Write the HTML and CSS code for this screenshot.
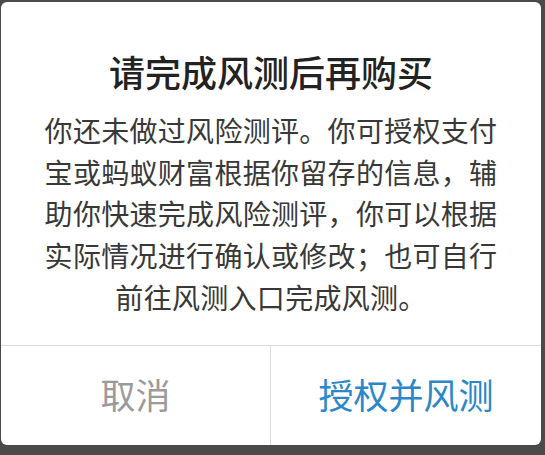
FILE: index.html
```html
<!DOCTYPE html>
<html lang="zh-CN">
<head>
<meta charset="utf-8">
<title>请完成风测后再购买</title>
<link rel="stylesheet" href="styles.css">
</head>
<body>
<div class="dialog">
  <div class="content">
    <h1 class="title">请完成风测后再购买</h1>
    <p class="message">你还未做过风险测评。你可授权支付<br>宝或蚂蚁财富根据你留存的信息，辅<br>助你快速完成风险测评，你可以根据<br>实际情况进行确认或修改；也可自行<br>前往风测入口完成风测。</p>
  </div>
  <div class="actions">
    <div class="btn btn-cancel">取消</div>
    <div class="btn btn-confirm">授权并风测</div>
  </div>
</div>
</body>
</html>
```

FILE: styles.css
```css
html, body {
  margin: 0;
  padding: 0;
  background: #4a4a4a;
  width: 545px;
  height: 455px;
  overflow: hidden;
}
body {
  font-family: "Noto Sans CJK SC", "Noto Sans", sans-serif;
}
.dialog {
  margin: 2px 4px 0 1px;
  height: 443px;
  background: #ffffff;
  border-radius: 6px;
  display: flex;
  flex-direction: column;
  overflow: hidden;
}
.content {
  padding: 47px 20px 26px;
  text-align: center;
  border-bottom: 1px solid #dcdcdc;
}
.title {
  margin: 0;
  font-size: 36px;
  line-height: 44px;
  font-weight: 500;
  color: #222222;
}
.message {
  margin: 17px 0 0;
  font-size: 28px;
  line-height: 41.7px;
  letter-spacing: 0.3px;
  color: #383838;
}
.actions {
  flex: 1;
  display: flex;
}
.btn {
  display: flex;
  align-items: center;
  justify-content: center;
  font-size: 35px;
  padding-bottom: 4px;
}
.btn-cancel {
  width: 269px;
  border-right: 1px solid #dcdcdc;
  color: #9a9a9a;
}
.btn-confirm {
  flex: 1;
  color: #2a87c9;
}
```
